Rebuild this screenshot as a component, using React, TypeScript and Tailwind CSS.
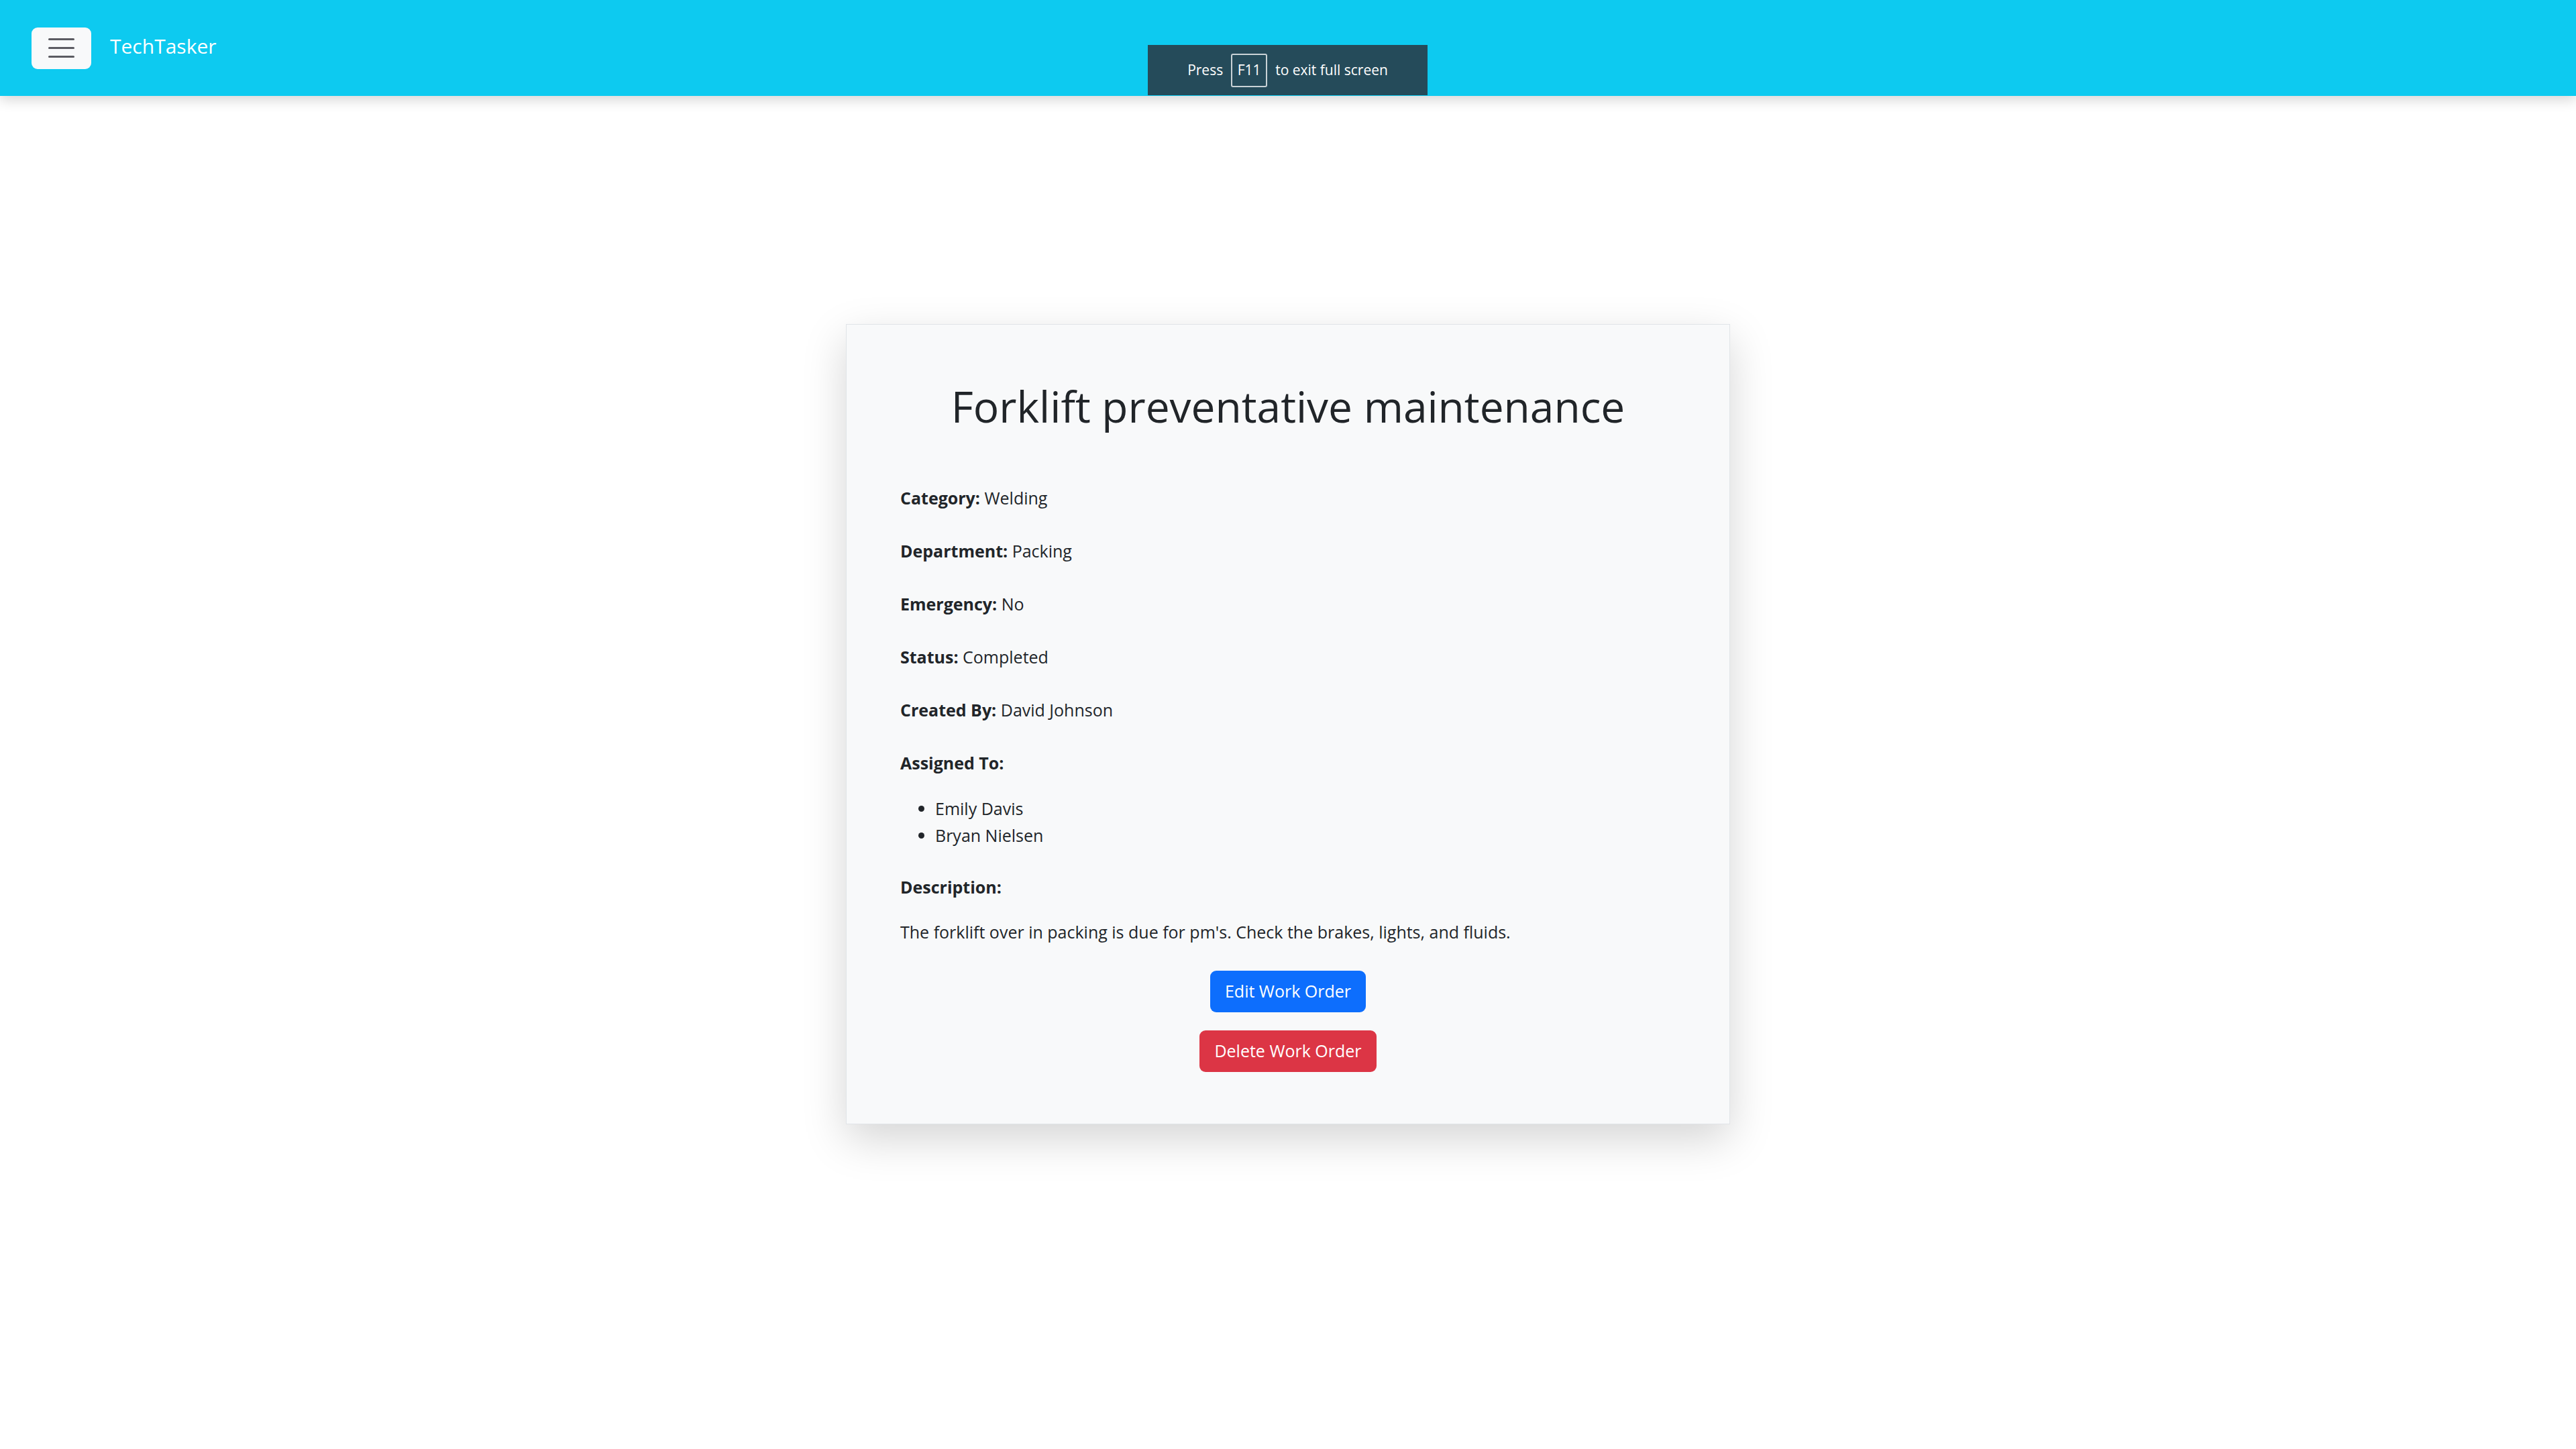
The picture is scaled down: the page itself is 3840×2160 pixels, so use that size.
import React from "react";

const workOrder = {
  title: "Forklift preventative maintenance",
  category: "Welding",
  department: "Packing",
  emergency: "No",
  status: "Completed",
  createdBy: "David Johnson",
  assignedTo: ["Emily Davis", "Bryan Nielsen"],
  description:
    "The forklift over in packing is due for pm's. Check the brakes, lights, and fluids.",
};

function Navbar() {
  return (
    <nav className="relative h-[143px] bg-[#0dcaf0] flex items-center pl-[47px] shadow-[0_6px_18px_rgba(0,0,0,0.16)] z-10">
      <button className="w-[89px] h-[62px] bg-[#f8f9fa] rounded-[9px] flex flex-col justify-center items-center gap-[10px]">
        <span className="block w-[39px] h-[3px] rounded-full bg-[#5b5b62]" />
        <span className="block w-[39px] h-[3px] rounded-full bg-[#5b5b62]" />
        <span className="block w-[39px] h-[3px] rounded-full bg-[#5b5b62]" />
      </button>
      <span className="ml-[28px] text-white text-[30px] leading-none -mt-[6px]">TechTasker</span>

      {/* browser full screen hint */}
      <div className="absolute left-[1711px] top-[67px] w-[417px] h-[75px] bg-[#254b5a] flex items-center justify-center gap-[12px] text-white text-[21px]">
        <span>Press</span>
        <span className="w-[54px] h-[50px] border-2 border-[#c9d2d6] rounded-[3px] flex items-center justify-center">
          F11
        </span>
        <span>to exit full screen</span>
      </div>
    </nav>
  );
}

function Field({ label, value }: { label: string; value: string }) {
  return (
    <p className="leading-[40px] mb-[39px]">
      <span className="font-bold">{label}:</span> {value}
    </p>
  );
}

export default function App() {
  return (
    <div className="min-h-screen bg-white font-['Open_Sans',sans-serif] text-[#212529]">
      <Navbar />
      <main className="flex justify-center pt-[340px] pb-[200px]">
        <div className="w-[1318px] bg-[#f8f9fa] border border-[#e1e4e8] shadow-[0_22px_60px_rgba(0,0,0,0.17)] px-[80px] pt-[82px] pb-[77px] text-[25px]">
          <h1 className="text-center text-[64px] leading-[79px] font-medium mb-[77px]">
            {workOrder.title}
          </h1>

          <Field label="Category" value={workOrder.category} />
          <Field label="Department" value={workOrder.department} />
          <Field label="Emergency" value={workOrder.emergency} />
          <Field label="Status" value={workOrder.status} />
          <Field label="Created By" value={workOrder.createdBy} />

          <p className="leading-[40px] mb-[28px] font-bold">Assigned To:</p>
          <ul className="list-disc pl-[52px] mb-[37px]">
            {workOrder.assignedTo.map((name) => (
              <li key={name} className="leading-[40px]">
                {name}
              </li>
            ))}
          </ul>

          <p className="leading-[40px] mb-[27px] font-bold">Description:</p>
          <p className="leading-[40px] mb-[38px]">{workOrder.description}</p>

          <div className="flex flex-col items-center gap-[27px]">
            <button className="h-[62px] px-[22px] rounded-[9px] bg-[#0d6efd] text-white text-[25px]">
              Edit Work Order
            </button>
            <button className="h-[62px] px-[22px] rounded-[9px] bg-[#dc3545] text-white text-[25px]">
              Delete Work Order
            </button>
          </div>
        </div>
      </main>
    </div>
  );
}
